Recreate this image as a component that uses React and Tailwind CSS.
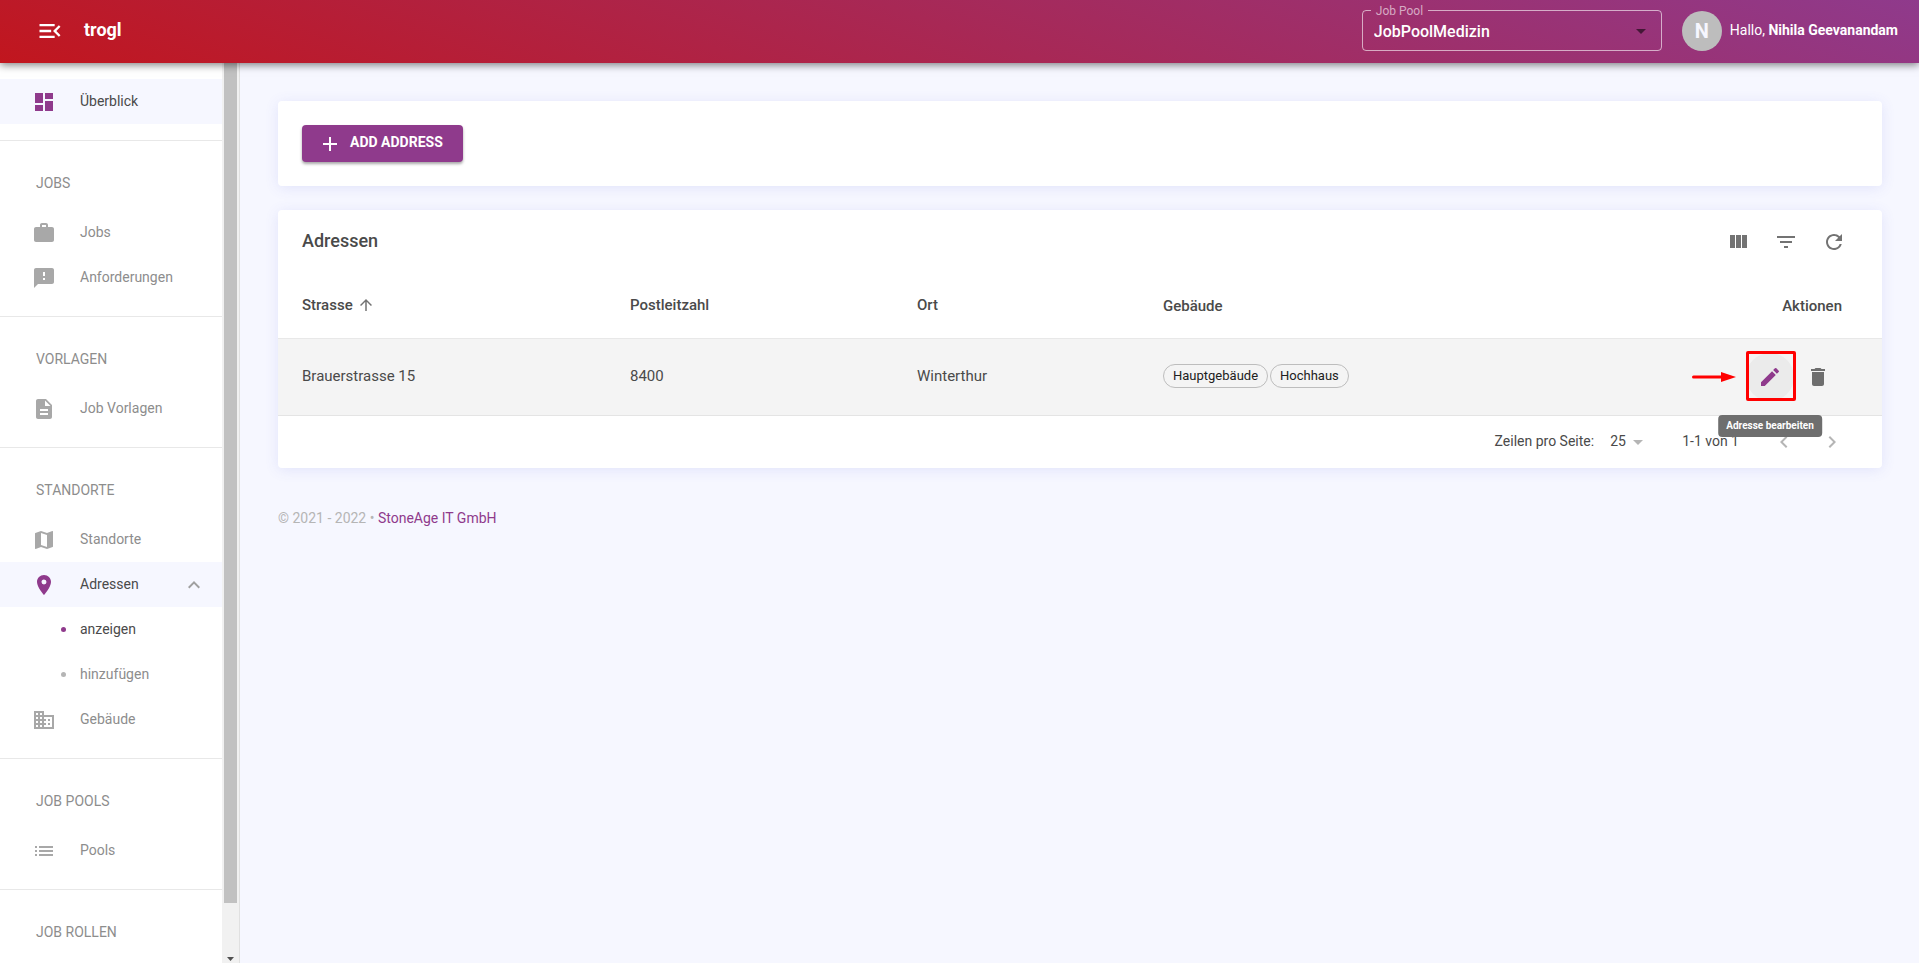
import React, { useState } from "react";
import {
  MdMenuOpen,
  MdDashboard,
  MdWork,
  MdFeedback,
  MdDescription,
  MdMap,
  MdLocationOn,
  MdDomain,
  MdList,
  MdExpandLess,
  MdExpandMore,
  MdAdd,
  MdArrowUpward,
  MdArrowDropDown,
  MdFilterList,
  MdRefresh,
  MdEdit,
  MdDelete,
  MdChevronLeft,
  MdChevronRight,
} from "react-icons/md";

const sections = [
  {
    title: "Jobs",
    items: [
      { label: "Jobs", icon: MdWork },
      { label: "Anforderungen", icon: MdFeedback },
    ],
  },
  {
    title: "Vorlagen",
    items: [{ label: "Job Vorlagen", icon: MdDescription }],
  },
  {
    title: "Standorte",
    items: [
      { label: "Standorte", icon: MdMap },
      {
        label: "Adressen",
        icon: MdLocationOn,
        children: ["anzeigen", "hinzufügen"],
      },
      { label: "Gebäude", icon: MdDomain },
    ],
  },
  {
    title: "Job Pools",
    items: [{ label: "Pools", icon: MdList }],
  },
  {
    title: "Job Rollen",
    items: [],
  },
];

const addresses = [
  {
    street: "Brauerstrasse 15",
    zip: "8400",
    city: "Winterthur",
    buildings: ["Hauptgebäude", "Hochhaus"],
  },
];

function ColumnsIcon() {
  return (
    <svg viewBox="0 0 24 24" className="w-6 h-6" fill="currentColor" aria-hidden="true">
      <path d="M10 18h5V5h-5v13zm-6 0h5V5H4v13zM16 5v13h5V5h-5z" />
    </svg>
  );
}

function NavItem({ label, icon: Icon, active, open, onClick }) {
  return (
    <a
      href="#"
      onClick={onClick}
      className={`flex items-center h-[45px] pl-8 pr-4 ${
        active ? "bg-[#f6f7ff] text-[#4a4a4a]" : "text-[#8d8d8d] hover:bg-[#f6f7ff]"
      }`}
    >
      <Icon className={`w-6 h-6 mr-6 ${active ? "text-[#8f3a8c]" : "text-[#a8a8a8]"}`} />
      <span className="flex-1 pb-[2px]">{label}</span>
      {open !== undefined &&
        (open ? (
          <MdExpandLess className="w-6 h-6 text-[#a0a0a0]" />
        ) : (
          <MdExpandMore className="w-6 h-6 text-[#a0a0a0]" />
        ))}
    </a>
  );
}

function Sidebar() {
  const [open, setOpen] = useState(true);

  return (
    <aside className="flex w-60 shrink-0 bg-white border-r border-[#e0e0e0]">
      <nav className="flex-1 overflow-hidden pt-4">
        <NavItem label="Überblick" icon={MdDashboard} active />
        {sections.map((section) => (
          <div key={section.title} className="mt-4 border-t border-[#e8e8e8] pt-4">
            <h2 className="flex items-center h-[53px] px-9 pb-[2px] uppercase text-[#8d8d8d]">
              {section.title}
            </h2>
            {section.items.map((item) => (
              <React.Fragment key={item.label}>
                <NavItem
                  label={item.label}
                  icon={item.icon}
                  active={!!item.children}
                  open={item.children ? open : undefined}
                  onClick={item.children ? () => setOpen(!open) : undefined}
                />
                {item.children &&
                  open &&
                  item.children.map((child, i) => (
                    <a
                      key={child}
                      href="#"
                      className={`flex items-center h-[45px] pl-[61px] ${
                        i === 0 ? "text-[#4a4a4a]" : "text-[#8d8d8d]"
                      }`}
                    >
                      <span
                        className={`w-[5px] h-[5px] mr-[14px] rounded-full ${
                          i === 0 ? "bg-[#8f3a8c]" : "bg-[#b5b5b5]"
                        }`}
                      />
                      <span className="pb-[2px]">{child}</span>
                    </a>
                  ))}
              </React.Fragment>
            ))}
          </div>
        ))}
      </nav>

      {/* Scrollbar */}
      <div className="flex flex-col items-center w-[17px] bg-[#f1f1f1]">
        <div className="w-[13px] flex-1 bg-[#c1c1c1]" />
        <div className="flex items-end justify-center h-[60px] pb-[2px]">
          <svg viewBox="0 0 7 4" className="w-[7px] h-1" fill="#505050" aria-hidden="true">
            <path d="M0 0h7L3.5 4z" />
          </svg>
        </div>
      </div>
    </aside>
  );
}

function Header() {
  return (
    <header className="relative z-10 flex items-center shrink-0 h-[63px] pl-9 pr-[21px] pb-[2px] text-white bg-[linear-gradient(20deg,#c1161e_0%,#8f3a8c_100%)] shadow-[0_2px_8px_rgba(0,0,0,0.5)]">
      <button type="button" aria-label="Menü" className="mr-5">
        <MdMenuOpen className="w-7 h-7" />
      </button>
      <a href="#" className="flex-1 pb-[2px] text-lg font-bold">
        trogl
      </a>

      {/* Job pool picker */}
      <fieldset className="relative w-[300px] h-12 -mt-2 mr-5 border border-white/60 rounded">
        <legend className="ml-2 px-[5px] text-xs leading-4 text-white/60">
          <label htmlFor="job-pool">Job Pool</label>
        </legend>
        <select
          id="job-pool"
          className="block w-full h-[26px] pl-[11px] pr-8 text-base font-medium appearance-none bg-transparent"
        >
          <option>JobPoolMedizin</option>
        </select>
        <MdArrowDropDown className="absolute right-2 bottom-[7px] w-6 h-6 text-black/55 pointer-events-none" />
      </fieldset>

      <div className="flex items-center justify-center w-10 h-10 mr-2 rounded-full bg-[#bdbdbd] text-[#f6f7ff] text-xl font-bold">
        N
      </div>
      <p className="pb-[2px]">
        Hallo, <span className="font-bold">Nihila Geevanandam</span>
      </p>
    </header>
  );
}

function AddressTable() {
  return (
    <section className="bg-white rounded shadow-[0_2px_14px_rgba(80,90,220,0.12)] text-[#4a4a4a]">
      <div className="flex items-center h-16 px-6">
        <h1 className="flex-1 pb-[2px] text-lg font-medium">Adressen</h1>
        <div className="flex text-[#737373]">
          <button type="button" aria-label="Spalten" className="p-3">
            <ColumnsIcon />
          </button>
          <button type="button" aria-label="Filter" className="p-3">
            <MdFilterList className="w-6 h-6" />
          </button>
          <button type="button" aria-label="Aktualisieren" className="p-3">
            <MdRefresh className="w-6 h-6" />
          </button>
        </div>
      </div>

      <table className="w-full table-fixed text-left text-[15px] border-separate border-spacing-0">
        <thead>
          <tr className="h-[65px]">
            <th className="w-[328px] px-6 font-medium border-b border-[#e8e8e8]">
              <span className="flex items-center gap-1">
                Strasse
                <MdArrowUpward className="w-[18px] h-[18px] mb-[2px] text-[#737373]" />
              </span>
            </th>
            <th className="w-[287px] px-6 font-medium border-b border-[#e8e8e8]">Postleitzahl</th>
            <th className="w-[246px] px-6 font-medium border-b border-[#e8e8e8]">Ort</th>
            <th className="px-6 pt-[2px] font-medium border-b border-[#e8e8e8]">Gebäude</th>
            <th className="w-[200px] pr-10 pt-[2px] font-medium text-right border-b border-[#e8e8e8]">
              Aktionen
            </th>
          </tr>
        </thead>
        <tbody>
          {addresses.map((address) => (
            <tr key={address.street} className="h-[77px] bg-[#f4f4f4]">
              <td className="px-6 border-b border-[#e4e4e4]">{address.street}</td>
              <td className="px-6 border-b border-[#e4e4e4]">{address.zip}</td>
              <td className="px-6 border-b border-[#e4e4e4]">{address.city}</td>
              <td className="px-6 pb-[2px] border-b border-[#e4e4e4]">
                <div className="flex gap-[2px]">
                  {address.buildings.map((building) => (
                    <span
                      key={building}
                      className="flex items-center h-6 px-[9px] text-[13px] text-[#212121] border border-[#bdbdbd] rounded-full"
                    >
                      {building}
                    </span>
                  ))}
                </div>
              </td>
              <td className="pr-10 border-b border-[#e4e4e4]">
                <div className="flex items-center justify-end">
                  {/* Hint arrow */}
                  <svg
                    viewBox="0 0 44 10"
                    className="w-11 h-[10px] mr-[10px]"
                    fill="#ff0000"
                    aria-hidden="true"
                  >
                    <path d="M1.5 3.5H29V0l15 5-15 5V6.5H1.5a1.5 1.5 0 0 1 0-3z" />
                  </svg>
                  <div className="relative">
                    <button
                      type="button"
                      aria-label="Adresse bearbeiten"
                      className="block p-3 rounded-full bg-[#ebebeb] text-[#8f3a8c]"
                    >
                      <MdEdit className="w-6 h-6" />
                    </button>
                    <span className="absolute -top-[2px] left-0 w-[50px] h-[50px] border-3 border-[#ff0000] rounded-xs pointer-events-none" />
                    <span
                      role="tooltip"
                      className="absolute z-10 top-[62px] left-1/2 -translate-x-1/2 px-2 text-[10px] leading-[22px] font-bold text-white whitespace-nowrap bg-[#6e6e6e] rounded"
                    >
                      Adresse bearbeiten
                    </span>
                  </div>
                  <button type="button" aria-label="Adresse löschen" className="p-3 text-[#6e6e6e]">
                    <MdDelete className="w-6 h-6" />
                  </button>
                </div>
              </td>
            </tr>
          ))}
        </tbody>
      </table>

      {/* Pagination */}
      <div className="flex items-center justify-end h-[52px] pr-[26px]">
        <label htmlFor="page-size" className="mr-4 pb-[2px]">
          Zeilen pro Seite:
        </label>
        <div className="relative mr-8">
          <select id="page-size" className="block w-10 h-8 pb-[2px] appearance-none">
            <option>25</option>
            <option>50</option>
          </select>
          <MdArrowDropDown className="absolute right-0 top-1 w-6 h-6 text-[#b5b5b5] pointer-events-none" />
        </div>
        <span className="mr-[21px] pb-[2px]">1-1 von 1</span>
        <button type="button" disabled aria-label="Vorherige Seite" className="p-3 text-[#b5b5b5]">
          <MdChevronLeft className="w-6 h-6" />
        </button>
        <button type="button" disabled aria-label="Nächste Seite" className="p-3 text-[#b5b5b5]">
          <MdChevronRight className="w-6 h-6" />
        </button>
      </div>
    </section>
  );
}

export default function App() {
  return (
    <div className="flex flex-col h-screen overflow-hidden bg-[#f6f7ff] font-[Roboto,sans-serif] text-sm">
      <Header />
      <div className="flex flex-1 min-h-0">
        <Sidebar />
        <main className="flex flex-col flex-1 gap-6 pl-[38px] pr-[37px] pt-[38px] overflow-hidden">
          <section className="p-6 bg-white rounded shadow-[0_2px_14px_rgba(80,90,220,0.12)]">
            <button
              type="button"
              className="flex items-center gap-2 h-[37px] pl-4 pr-5 font-bold uppercase text-white bg-[#8f3a8c] rounded shadow-[0_2px_3px_rgba(0,0,0,0.35)]"
            >
              <MdAdd className="w-6 h-6" />
              <span className="pb-1">Add Address</span>
            </button>
          </section>

          <AddressTable />

          <footer className="pt-4 text-[#b5b5b5]">
            © 2021 - 2022 •{" "}
            <a href="#" className="text-[#8f3a8c]">
              StoneAge IT GmbH
            </a>
          </footer>
        </main>
      </div>
    </div>
  );
}
